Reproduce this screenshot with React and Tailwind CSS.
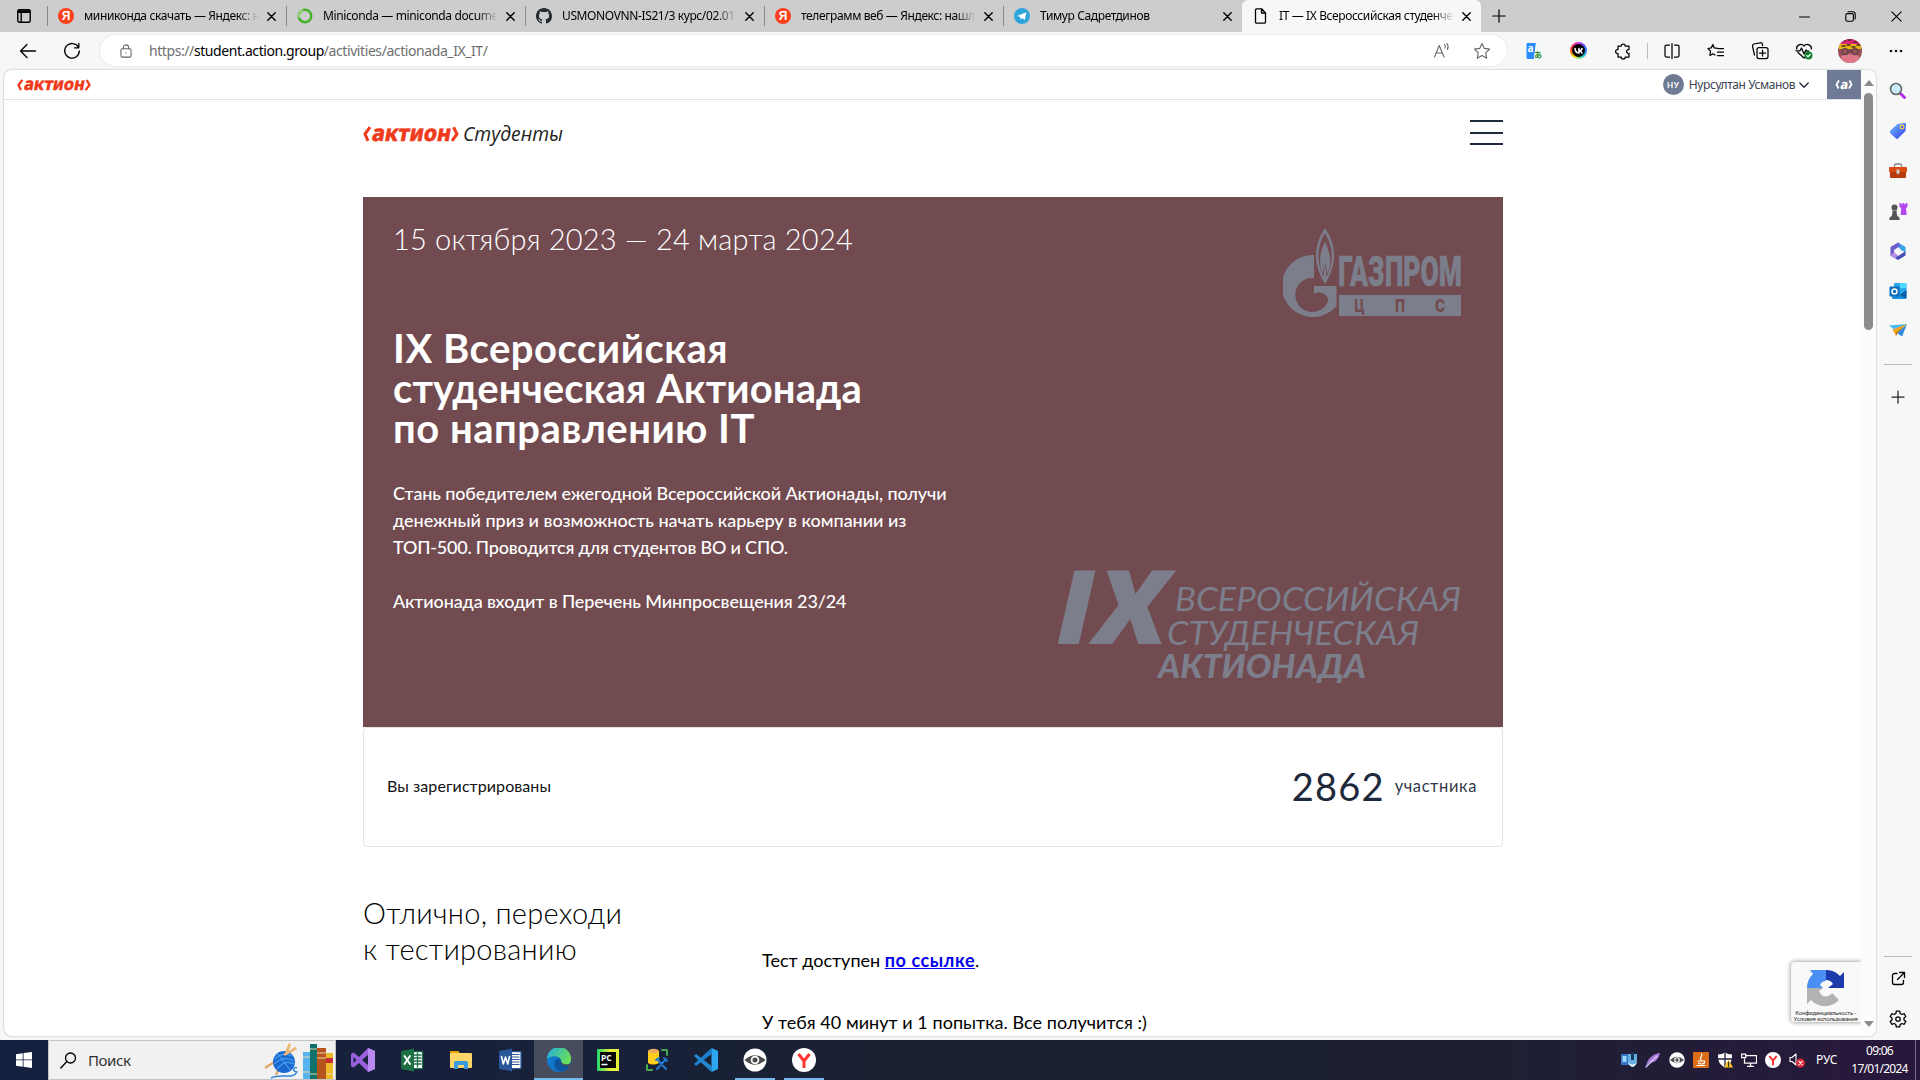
const S = ({ s = 20, box, className = "", children, ...p }) => (
  <svg width={s} height={s} viewBox={box || `0 0 ${s} ${s}`} fill="none" stroke="currentColor" strokeWidth="1.25" strokeLinecap="round" strokeLinejoin="round" className={`shrink-0 ${className}`} {...p}>
    {children}
  </svg>
);

const YandexFav = () => (
  <span className="flex h-4 w-4 items-center justify-center rounded-full bg-[#fc3f1d] font-['Liberation_Sans'] text-[12px] leading-none font-bold text-white">Я</span>
);
const RingFav = () => (
  <S s={16} strokeWidth="2.4" strokeLinecap="butt">
    <circle cx="8" cy="8" r="6.3" stroke="#43b02a" />
    <path d="M6 2A6.3 6.3 0 0 0 2 9.500" stroke="#8ed47c" />
  </S>
);
const GithubFav = () => (
  <S s={16} fill="#24292f" stroke="none">
    <path d="M8 0C3.580 0 0 3.580 0 8c0 3.540 2.290 6.530 5.470 7.590.4.070.55-.17.55-.38v-1.490c-2.010.37-2.530-.49-2.690-.94-.09-.23-.48-.94-.82-1.130-.28-.15-.68-.52-.01-.53.63-.01 1.080.58 1.230.82.72 1.210 1.870.87 2.330.66.07-.52.28-.87.51-1.070-1.780-.2-3.640-.89-3.640-3.950 0-.87.31-1.590.82-2.150-.08-.2-.36-1.020.08-2.120 0 0 .67-.21 2.200.82a7.600 7.600 0 0 1 4 0c1.530-1.040 2.200-.82 2.200-.82.44 1.100.16 1.920.08 2.120.51.56.82 1.270.82 2.150 0 3.070-1.870 3.750-3.650 3.950.29.25.54.73.54 1.480v2.200c0 .21.15.46.55.38A8 8 0 0 0 16 8c0-4.420-3.580-8-8-8Z" />
  </S>
);
const TelegramFav = () => (
  <S s={16} stroke="none">
    <circle cx="8" cy="8" r="8" fill="#2da5dc" />
    <path d="M3.200 7.900 12.300 4.300 10.800 12l-2.700-2-1.500 1.500-.3-2.500Z" fill="#fff" />
  </S>
);
const PageFav = () => (
  <S s={16} strokeWidth="1.3">
    <path d="M3.700.8h5L12.500 5v9a1.200 1.200 0 0 1-1.200 1.200H3.700A1.200 1.200 0 0 1 2.500 14V2A1.200 1.200 0 0 1 3.700.8ZM8.500.8V5h4" />
  </S>
);

const Cross = () => (
  <S s={9} strokeWidth="1.4"><path d="m.8.8 7.400 7.400M8.200.8.8 8.200" /></S>
);

const tabs = [
  { fav: <YandexFav />, title: "миниконда скачать — Яндекс: нашлось" },
  { fav: <RingFav />, title: "Miniconda — miniconda documentation" },
  { fav: <GithubFav />, title: "USMONOVNN-IS21/3 курс/02.01 Раз" },
  { fav: <YandexFav />, title: "телеграмм веб — Яндекс: нашлось" },
  { fav: <TelegramFav />, title: "Тимур Садретдинов" },
  { fav: <PageFav />, title: "IT — IX Всероссийская студенческая", active: true },
];

function TabStrip() {
  return (
    <div className="flex h-8 items-stretch bg-[#cdcdcd]">
      <div className="flex w-[47px] items-center justify-center">
        <S s={14} strokeWidth="1.4"><rect x=".8" y=".8" width="12.400" height="12.400" rx="1.500" /><path d="M1 3.200h12M4.200 3.500v9.500M1 2h12" /></S>
      </div>
      {tabs.map((t, i) => (
        <div key={i} className={`flex w-[239px] shrink-0 items-center pl-[11px] ${t.active ? "rounded-t-md bg-[#f7f7f7]" : "relative before:absolute before:top-[6px] before:left-0 before:h-5 before:w-px before:bg-[#8a8a8a]"}`}>
          {t.fav}
          <span className="ml-[10px] w-[175px] overflow-hidden text-[12px] tracking-[-0.38px] whitespace-nowrap [mask-image:linear-gradient(to_right,#000_88%,transparent)]">{t.title}</span>
          <span className="ml-[8px]"><Cross /></span>
        </div>
      ))}
      <div className="flex w-[36px] items-center justify-center"><S s={14} strokeWidth="1.2"><path d="M7 .8v12.400M.8 7h12.400" /></S></div>
      <div className="ml-auto flex items-center gap-[35px] pr-[18px]">
        <S s={11} strokeWidth="1.1"><path d="M.5 6h10" /></S>
        <S s={11} strokeWidth="1.1"><rect x=".8" y="2.600" width="7.600" height="7.600" rx="1.500" /><path d="M3 .8h5A2.300 2.300 0 0 1 10.200 3v5" /></S>
        <S s={11} strokeWidth="1.1"><path d="m.8.8 9.400 9.400M10.200.8.8 10.200" /></S>
      </div>
    </div>
  );
}

function Toolbar() {
  return (
    <div className="flex h-[37px] items-center bg-[#f7f7f7]">
      <S s={18} className="ml-[19px]" strokeWidth="1.3"><path d="M16.500 9H1.500M8 2.500 1.500 9 8 15.500" /></S>
      <S s={18} className="ml-[26px]" strokeWidth="1.3"><path d="M15.500 5.500A7.300 7.300 0 1 0 16.300 9M15.800 1.500v4.300h-4.300" /></S>
      <div className="ml-[19px] flex h-[31px] w-[1407px] items-center rounded-full bg-white pr-[16px] pl-[19px] shadow-[0_0_2px_rgba(0,0,0,0.15)]">
        <S s={14} box="0 0 14 16" className="text-[#666]" strokeWidth="1.2"><rect x="1.200" y="5.500" width="11.600" height="9.500" rx="1.500" /><path d="M4 5.500V4a3 3 0 0 1 6 0v1.500M7 10v.4" /></S>
        <span className="ml-[16px] text-[14px] leading-none tracking-[-0.42px] text-[#6f6f6f]">https://<span className="text-black">student.action.group</span>/activities/actionada_IX_IT/</span>
        <span className="ml-auto flex items-center gap-[22px] text-[#666]">
          <S s={18} strokeWidth="1.1"><path d="m1.500 15 4.700-11.500L11 15M3 11h6.500M11.500 2.500c1 1 1 2.500.3 3.500M14 1.500c1.500 2 1.500 4 .3 6" /></S>
          <S s={18} strokeWidth="1.1"><path d="m9 1.500 2.300 4.900 5.300.7-3.900 3.700 1 5.400L9 13.600l-4.700 2.600 1-5.400L1.400 7.100l5.300-.7Z" /></S>
        </span>
      </div>
      <div className="ml-[18px] flex items-center">
        <S s={18} stroke="none"><path d="M2 1h9l-2 16H3a1.500 1.500 0 0 1-1.500-1.500v-13Z" fill="#2a8cff" /><path d="M11 1h5.500v16H9Z" fill="#f4fbf4" /><text x="2.500" y="9.500" fontSize="10" fontWeight="700" fill="#fff" fontFamily="Noto Sans">a</text><text x="9" y="15.500" fontSize="8" fontWeight="700" fill="#2e8b34" fontFamily="Noto Sans CJK JP">あ</text></S>
        <span className="ml-[27px] flex h-[17px] w-[17px] items-center justify-center rounded-full bg-[conic-gradient(#d033e8,#2864ff,#1bd9d0,#ffe100,#ff3030,#d033e8)]">
          <span className="flex h-[13px] w-[13px] items-center justify-center rounded-full bg-black"><S s={9} strokeWidth="1.6" className="text-white"><path d="M1 2.500C1.300 5 3 7 5 7V2.500M5 5c1.500 0 2.700-1 3-2.500M5 4.800c1.500 0 2.500 1 3 2.200" /></S></span>
        </span>
        <S s={18} className="ml-[27px]"><path d="M4 4h3.200a2 2 0 1 1 4 0H15v3.600a2 2 0 1 0 0 3.900V15h-3.800a2 2 0 0 1-4 0H4v-3.500a2 2 0 1 1 0-3.900Z" /></S>
        <span className="mx-[15px] h-4 w-px bg-[#bdbdbd]" />
        <S s={18}><path d="M6.500 3H3.500A1.500 1.500 0 0 0 2 4.500v9A1.500 1.500 0 0 0 3.500 15h3M11.500 3h3A1.500 1.500 0 0 1 16 4.500v9a1.500 1.500 0 0 1-1.500 1.500h-3M9 1.500v15" /></S>
        <S s={18} className="ml-[26px]"><path d="m10.500 5.800-3.200-.4L5.800 2 4.200 5.400 1 6l2.500 2.600L3 13l3-1.700L8 12.500M11 6h5.500M10.500 9.500h6M10.500 13h6" transform="translate(0 .5)" /></S>
        <S s={18} className="ml-[26px]"><rect x="6" y="5.500" width="11" height="11" rx="2" /><path d="M11.500 8v6M8.500 11h6M3.500 13 1.600 4.500A2 2 0 0 1 3 2l6-1.200A2 2 0 0 1 11.500 2.500V3.500" /></S>
        <S s={18} className="ml-[26px]"><path d="M16.300 7C17 3.500 12 .5 9 4 6 .5 1 3.500 1.700 7M3 10.500 9 16l1-1M1 8.800h4L6.500 6l2.500 6 2-4 1 1h2" /><circle cx="13.500" cy="13.500" r="4" fill="#13802b" stroke="none" /><path d="m11.800 13.600 1.200 1.200 2.300-2.400" stroke="#fff" /></S>
        <S s={24} className="ml-[25px]" stroke="none">
          <clipPath id="avatar"><circle cx="12" cy="12" r="12" /></clipPath>
          <g clipPath="url(#avatar)">
            <path d="M0 0h24v24H0Z" fill="#9c5157" /><path d="M0 0h24v5H0Z" fill="#e0247c" /><path d="M1 5h22v5H1Z" fill="#e6b414" /><path d="M3 17q9-4 18 0v7H3Z" fill="#de7889" />
            <path d="M4 2h3M10 1h3M16 3h3M4 7h3M9 6h3M14 8h3M19 6h3" stroke="#472b20" strokeWidth="1.500" />
            <circle cx="7" cy="12.500" r="3" stroke="#5b4247" /><circle cx="17" cy="12.500" r="3" stroke="#5b4247" /><path d="M10 12h4" stroke="#5b4247" />
          </g>
        </S>
        <S s={16} className="ml-[26px]" fill="#111" stroke="none"><circle cx="3" cy="8" r="1.300" /><circle cx="8" cy="8" r="1.300" /><circle cx="13" cy="8" r="1.300" /></S>
      </div>
    </div>
  );
}

const AktionLogo = ({ w, h }) => (
  <svg width={w} height={h} viewBox="0 0 96 16" preserveAspectRatio="none" className="shrink-0 overflow-visible">
    <g fill="none" stroke="#f03a1c" strokeWidth="3"><path d="M7 1.200 2 8 5 14.800" /><path d="M90.500 1.200 94 8 89 14.800" /></g>
    <text x="8" y="14.800" transform="translate(2.600 0) skewX(-10)" fontFamily="Noto Sans" fontWeight="800" fontSize="22.500" fill="#f03a1c" stroke="#f03a1c" strokeWidth=".5" textLength="79" lengthAdjust="spacingAndGlyphs">актион</text>
  </svg>
);

function PageTop() {
  return (
    <div className="flex h-[30px] shrink-0 items-center border-b border-[#e3e3e3] pl-[13px]">
      <AktionLogo w={74} h={12} />
      <span className="ml-auto flex h-[21px] w-[21px] items-center justify-center rounded-full bg-[#6f7b94] font-['Lato'] text-[8px] font-bold tracking-[0.6px] text-white">НУ</span>
      <span className="ml-[5px] text-[12px] tracking-[-0.42px] text-[#3b4252]">Нурсултан Усманов</span>
      <S s={10} className="ml-[4px] text-[#2b3140]" strokeWidth="1.4"><path d="m.8 3 4.200 4.300L9.200 3" /></S>
      <span className="ml-[18px] flex h-[29px] w-[34px] items-center justify-center self-start bg-[#6f7b94] text-white">
        <svg width="18" height="11" viewBox="0 0 18 11"><path d="M4 1.500 1.500 5.500 3.500 9.500M14.500 1.500l2 4-2.500 4" fill="none" stroke="#fff" strokeWidth="1.800" /><text x="6.200" y="9.500" transform="skewX(-8)" fontFamily="Noto Sans" fontWeight="800" fontSize="13" fill="#fff">a</text></svg>
      </span>
    </div>
  );
}

const GazpromLogo = () => (
  <svg width="180" height="90" viewBox="0 0 180 90" className="shrink-0">
    <g fill="#7c7e8b">
      <path d="M31 27V50A17 17 0 1 0 45.500 72 9.500 9.500 0 0 0 31 66V58H53.500V78A31 31 0 1 1 31 27Z" />
      <path d="M42 0C30 18 30 36 42 56 54 36 54 18 42 0Zm0 5c8.500 14 9 29 1.500 44L42 33l-1.500 16C33.500 34 33.500 19 42 5Z" fillRule="evenodd" />
      <path d="M42 14c-5.500 10-6.500 21-2.500 32L42 34l2.500 12C49 35 47.500 24 42 14Z" />
      <path d="M56 67h122v21H56Z" />
      <text x="55" y="57.500" fontFamily="Roboto" fontWeight="900" fontSize="43" stroke="#7c7e8b" strokeWidth=".6" textLength="124" lengthAdjust="spacingAndGlyphs">ГАЗПРОМ</text>
    </g>
    <g fill="#724b50" fontFamily="Roboto" fontWeight="900" fontSize="18">
      <text x="71.500" y="84" textLength="10" lengthAdjust="spacingAndGlyphs">Ц</text>
      <text x="112" y="84" textLength="10" lengthAdjust="spacingAndGlyphs">П</text>
      <text x="152" y="84" textLength="10" lengthAdjust="spacingAndGlyphs">С</text>
    </g>
  </svg>
);

const EventLogo = () => (
  <svg width="406" height="118" viewBox="0 0 406 118" className="shrink-0 overflow-visible" fill="#7c7e8b" fontStyle="italic">
    <text x="-1" y="77" fontFamily="Open Sans" fontWeight="800" fontSize="102" textLength="112" lengthAdjust="spacingAndGlyphs">IX</text>
    <g fontFamily="Lato" fontSize="32">
      <text x="118" y="44" textLength="286" lengthAdjust="spacingAndGlyphs">ВСЕРОССИЙСКАЯ</text>
      <text x="110" y="77.500" textLength="252" lengthAdjust="spacingAndGlyphs">СТУДЕНЧЕСКАЯ</text>
      <text x="101" y="110.500" fontWeight="900" textLength="208" lengthAdjust="spacingAndGlyphs">АКТИОНАДА</text>
    </g>
  </svg>
);

function Site() {
  return (
    <div className="ml-[359px] flex w-[1140px] flex-col font-['Lato']">
      <header className="flex h-[97px] shrink-0 items-start justify-between pt-[20px]">
        <div className="flex items-center pt-[3px]">
          <AktionLogo w={96} h={16} />
          <svg width="104" height="22" viewBox="0 0 104 22" className="ml-1 overflow-visible"><text x="0" y="17.500" fontFamily="Open Sans" fontStyle="italic" fontSize="20" fill="#222" textLength="100" lengthAdjust="spacingAndGlyphs">Студенты</text></svg>
        </div>
        <div className="flex w-[33px] flex-col gap-[9.500px]">
          <span className="h-0.5 bg-[#1e293b]" /><span className="h-0.5 bg-[#1e293b]" /><span className="h-0.5 bg-[#1e293b]" />
        </div>
      </header>
      <section className="flex h-[530px] shrink-0 justify-between bg-[#724b50] pr-[40px] pl-[30px] text-white">
        <div className="pt-[24px]">
          <p className="text-[29px] leading-9 font-light tracking-[0.2px]">15 октября 2023 — 24 марта 2024</p>
          <h1 className="mt-[71px] flex flex-col text-[40px] leading-10 font-bold whitespace-nowrap">
            <span className="tracking-[0.52px]">IX Всероссийская</span>
            <span className="tracking-[0.1px]">студенческая Актионада</span>
            <span className="tracking-[0.5px]">по направлению IT</span>
          </h1>
          <p className="mt-[32px] text-[18px] leading-[27px] font-medium tracking-[-0.13px] whitespace-nowrap">
            Стань победителем ежегодной Всероссийской Актионады, получи<br /><span className="tracking-[-0.03px]">денежный приз и возможность начать карьеру в компании из</span><br /><span className="tracking-[-0.2px]">ТОП-500. Проводится для студентов ВО и СПО.</span><br /><br />Актионада входит в Перечень Минпросвещения 23/24
          </p>
        </div>
        <div className="flex flex-col items-end justify-between pt-[31px] pb-[42px]">
          <GazpromLogo />
          <EventLogo />
        </div>
      </section>
      <section className="flex h-[120px] shrink-0 items-center justify-between rounded border border-[#e4e4e6] pr-[25px] pb-[3px] pl-[23px] text-[#1e293b]">
        <span className="text-[16px] tracking-[0.08px] text-[#111]">Вы зарегистрированы</span>
        <span className="flex items-center gap-[10px]"><span className="text-[38px] leading-none tracking-[1.2px]">2862</span><span className="pt-px text-[16.500px] tracking-[0.6px] text-[#333b4a]">участника</span></span>
      </section>
      <section className="flex pt-[48px] text-black">
        <h2 className="w-[399px] text-[29px] leading-9 font-light tracking-[0.28px]">Отлично, переходи<br />к тестированию</h2>
        <div className="flex flex-col gap-[35px] pt-[52px] text-[18px] leading-[27px] whitespace-nowrap">
          <p>Тест доступен <a className="font-bold tracking-[0.55px] text-[#0000ee] underline">по ссылке</a>.</p>
          <p className="tracking-[0.04px]">У тебя 40 минут и 1 попытка. Все получится :)</p>
        </div>
      </section>
    </div>
  );
}

function Scrollbar() {
  return (
    <div className="flex w-[15px] flex-col items-center bg-[#fcfcfc] pt-[10px] pb-[9px]">
      <svg width="10" height="6"><path d="M0 6 5 0l5 6Z" fill="#8b8b8b" /></svg>
      <span className="mt-[7px] h-[237px] w-[9px] rounded-full bg-[#8b8b8b]" />
      <svg width="10" height="6" className="mt-auto"><path d="M0 0h10L5 6Z" fill="#8b8b8b" /></svg>
    </div>
  );
}

const Recaptcha = () => (
  <div className="absolute right-0 bottom-[14px] flex h-[60px] w-[70px] flex-col items-center rounded-l-sm bg-[#f9f9f9] pt-[7px] pr-[1px] shadow-[0_0_5px_#808080] [clip-path:inset(-6px_0_-6px_-6px)]">
    <svg width="38" height="38" viewBox="0 0 38 38" className="shrink-0">
      <path d="M0 19A19 19 0 0 1 6 5L3 1h16v11a7 7 0 0 0-6 4l3 3Z" fill="#4a90f4" />
      <path d="M19 1a18 18 0 0 1 14 6l4-4v16H21l5-4a8 8 0 0 0-7-4Z" fill="#1c3aa9" />
      <path d="M0 19h16l-4 3c3 7 9 7 13 2l7 7A19 19 0 0 1 4 31l-4 4Z" fill="#b3b3b3" />
    </svg>
    <span className="mt-[3px] text-center font-['Roboto'] text-[6px] leading-[6px] tracking-[-0.23px] whitespace-nowrap text-[#333]">Конфиденциальность -<br />Условия использования</span>
  </div>
);

function Sidebar() {
  return (
    <aside className="flex w-[43px] flex-col items-center pt-[11px] pb-[12px]">
      <div className="flex flex-col items-center gap-[20px]">
        <S s={20} strokeWidth="1.600"><path d="m12.500 12.500 4 4" stroke="#b12ff0" strokeWidth="3" /><circle cx="8" cy="8" r="5.500" fill="#c9ecfb" stroke="#666" /></S>
        <S s={20} stroke="none"><path d="M2 10 9.500 3 17 2a1 1 0 0 1 1 1l-.5 7L10 17.500a1.500 1.500 0 0 1-2 0L2 12Z" fill="url(#tag)" /><circle cx="14" cy="6" r="1.800" fill="#4a5fd8" stroke="#ffd43b" strokeWidth="1.200" /><defs><linearGradient id="tag" x2="1" y2="1"><stop stopColor="#6cc0ff" /><stop offset="1" stopColor="#3b3bf0" /></linearGradient></defs></S>
        <S s={20} stroke="none"><path d="M6.500 6V4.500A1.500 1.500 0 0 1 8 3h4a1.500 1.500 0 0 1 1.500 1.500V6" stroke="#888" strokeWidth="1.300" /><path d="M1 7a1 1 0 0 1 1-1h16a1 1 0 0 1 1 1v4H1Z" fill="#dc4a13" /><path d="M2 11h16v5a1 1 0 0 1-1 1H3a1 1 0 0 1-1-1Z" fill="#b8390e" /><path d="M8.500 8.500h3V12L10 13.500 8.500 12Z" fill="#c9cfd5" /></S>
        <S s={20} stroke="none"><path d="M11.500 2h1.800v1.300h1.400V2h1.600v1.300h1.400V2h1.800v4l-1.500 1 .7 7h-6l.4-7-1.600-1Z" fill="#b348f0" /><circle cx="6.500" cy="6.500" r="3" fill="#555" /><path d="M4 9.500h5l-.5 1.500.8 4 2.200 1.500V19H1.500v-2.500L3.800 15l.8-4Z" fill="#555" /></S>
        <S s={20} stroke="none"><path d="M10 1.500 17.500 6v5l-4-1.500-3.500-4Z" fill="#35a7e8" /><path d="M10 1.500 2.500 6v9l3.500 1V9l7-4.500Z" fill="#6a5fcf" /><path d="m6 13 4 2 4-2.500 3.500-2.500v4.500L10 19l-5-3Z" fill="#4651b8" /><path d="M2.500 14.500 6 11l4 3.500-2.500 2.800Z" fill="#b88be8" /></S>
        <S s={20} stroke="none"><rect x="6" y="2" width="12.500" height="15" rx="1" fill="#28a8ea" /><path d="M12 2h6.500v5H12Z" fill="#50d9ff" /><path d="M4 10.500 18.500 18H5.500A1.500 1.500 0 0 1 4 16.500Z" fill="#1490df" /><path d="m18.500 9-7 5 7 4Z" fill="#0a5fa8" /><rect x="1.500" y="5.500" width="10" height="10" rx="1" fill="#0f6cbd" /><circle cx="6.500" cy="10.500" r="2.500" stroke="#fff" strokeWidth="1.500" /></S>
        <S s={20} stroke="none"><path d="M1 4.500 19 3 8 10Z" fill="#47b9f5" /><path d="m19 3-5 12.500-4.500-3.300Z" fill="#2788e8" /><path d="m4.500 8.500 14-5.300L8 11.500V15Z" fill="#f2a31b" /><path d="m8 15 1.700-3L19 3 8 11.500Z" fill="#a56a0a" /></S>
      </div>
      <span className="mt-[23px] h-px w-7 bg-[#b9b9b9]" />
      <S s={14} className="mt-[25px] text-[#222]"><path d="M7 1v12M1 7h12" /></S>
      <span className="mt-auto h-px w-7 bg-[#b9b9b9]" />
      <S s={16} className="mt-[14px]" strokeWidth="1.300"><path d="M7 2.500H4.500a2 2 0 0 0-2 2v7a2 2 0 0 0 2 2h7a2 2 0 0 0 2-2V9.500M9.500 1.500h5v5M14.500 1.500 7.500 8.500" /></S>
      <S s={18} className="mt-[23px]" strokeWidth="1.300"><path d="m7.300 1.200-.5 2.300-1.700 1-2.300-.8L1.200 6.500 3 8.100v1.800l-1.800 1.600 1.600 2.800 2.300-.8 1.700 1 .5 2.300h3.400l.5-2.300 1.700-1 2.300.8 1.600-2.800L15 9.900V8.100l1.800-1.600-1.600-2.800-2.300.8-1.700-1-.5-2.300Z" /><circle cx="9" cy="9" r="2.200" /></S>
    </aside>
  );
}

const Eye = ({ s }) => (
  <S s={s} box="0 0 24 24" stroke="none"><circle cx="12" cy="12" r="11.500" fill="#fff" /><path d="M1.500 12Q12 2.500 22.500 12 12 21.500 1.500 12Z" fill="#4b4b4b" /><circle cx="12" cy="12" r="4.300" fill="#fff" /><circle cx="12" cy="12" r="2.500" fill="#4b4b4b" /></S>
);
const YBrowser = ({ s }) => (
  <S s={s} box="0 0 24 24" strokeLinecap="butt" strokeLinejoin="miter"><circle cx="12" cy="12" r="12" fill="#fff" stroke="none" /><path d="M6.500 6 12 13l5.500-7M12 12.500V20" stroke="#f33" strokeWidth="3" /></S>
);

const apps = [
  { icon: <S s={24} stroke="none"><path d="m17 0 7 3v18l-7 3L8 15l-5.500 4.500L0 18V6l2.500-1.500L8 9Zm0 7-6 5 6 5ZM2.500 9v6l3-3Z" fill="#9a5fdd" fillRule="evenodd" /><path d="m17 0 7 3v18l-7 3Z" fill="#b78af2" /></S> },
  { icon: <S s={24} stroke="none"><path d="M11 3.500h11.500v17H11Z" fill="#fff" stroke="#1d7044" /><path d="M14 7h7M14 10h7M14 13h7M14 16h7M17.500 5v14" stroke="#1d7044" strokeWidth="1.300" /><path d="m1 3 13-2.500v23L1 21Z" fill="#1d7044" /><path d="m4.500 8 5.500 8M10 8l-5.500 8" stroke="#fff" strokeWidth="2" /></S> },
  { icon: <S s={24} stroke="none"><path d="M1 3h8l2 2H1Z" fill="#e8a200" /><rect x="1" y="5" width="22" height="15" rx="1" fill="#ffd667" /><path d="M5 21v-6a2 2 0 0 1 2-2h10a2 2 0 0 1 2 2v6h-4v-4H9v4Z" fill="#3c9be0" /></S> },
  { icon: <S s={24} stroke="none"><path d="M11 3.500h12v17H11Z" fill="#fff" stroke="#2b579a" /><path d="M13 6.500h8M13 9h8M13 11.500h8M13 14h8M13 16.500h8" stroke="#2b579a" strokeWidth="1.200" /><path d="m1 3 13-2.500v23L1 21Z" fill="#2b579a" /><path d="m3.500 8.500 1.800 7.500 2.200-7 2.200 7 1.800-7.500" stroke="#fff" strokeWidth="1.600" /></S> },
  { active: true, icon: <S s={24} stroke="none"><defs><linearGradient id="eg" x2="1" y2=".5"><stop stopColor="#1fa8e8" /><stop offset="1" stopColor="#6be058" /></linearGradient></defs><circle cx="12" cy="12" r="12" fill="#1277c9" /><path d="M0 11A12 12 0 0 1 24 11c0 5-4 7-9 6-2-1-1-2-1-4 0-6-10-6-14-2Z" fill="url(#eg)" /><path d="M14 13c0 3 4 5 9 4a12 12 0 0 1-9 6.500C6 23 6 13 10 11c2-.5 4 0 4 2Z" fill="#0d559f" /><path d="M14 13.500c-1 2 1 4.500 5 4.500h3.700L24 15c-2 1.500-8 2.500-10-1.500Z" fill="#474d5c" /></S> },
  { icon: <S s={24} stroke="none"><rect x="1" y="1" width="22" height="22" fill="url(#pc)" /><rect x="4" y="4" width="16" height="16" fill="#080808" /><text x="5" y="12.500" fontFamily="Open Sans" fontWeight="700" fontSize="8.500" fill="#fff">PC</text><path d="M6 16.500h5" stroke="#fff" strokeWidth="1.300" /><defs><linearGradient id="pc" x2="1"><stop stopColor="#22d76e" /><stop offset=".6" stopColor="#e5f13b" /></linearGradient></defs></S> },
  { icon: <S s={24} stroke="none"><path d="M3 3v12q5 3 11 0V3Z" fill="#ffcf1b" /><ellipse cx="8.500" cy="3" rx="5.500" ry="2.200" fill="#ecaa62" /><path d="M17 2h5v5M2 17v5h5" stroke="#46a84a" strokeWidth="2" /><path d="m12 11 9 10M21 11l-9 10M11 12l3-2M19 10l3 3" stroke="#1f78d1" strokeWidth="2" /></S> },
  { icon: <S s={24} stroke="none"><path d="M0 16 17.500 0v6L2 18Z" fill="#1b80cf" /><path d="m0 8 2-2 15.500 12v6Z" fill="#2489d0" /><path d="M17.500 0 24 3v18l-6.500 3Z" fill="#2ba7f3" /></S> },
  { icon: <Eye s={24} />, open: true },
  { icon: <YBrowser s={24} />, open: true },
];

function Taskbar() {
  return (
    <div className="flex h-10 items-stretch bg-[linear-gradient(to_right,#15203f,#19213a_30%,#1a2130_52%,#1d2033_78%,#29183d)] text-white">
      <div className="flex w-12 items-center justify-center"><S s={16} stroke="none" fill="#fff"><path d="m0 2.200 6.700-1v6.300H0ZM7.500 1.100 16 0v7.500H7.500ZM0 8.300h6.700v6.400l-6.700-1ZM7.500 8.300H16V16l-8.500-1.200Z" /></S></div>
      <div className="flex w-[288px] items-center border border-[#c4c4c4] bg-[#f1f1f1] pr-[2px] pl-[11px] text-[#333]">
        <S s={17} className="text-black" strokeWidth="1.300"><circle cx="10.500" cy="6" r="5" /><path d="m6.800 9.500-6 6.500" /></S>
        <span className="ml-[11px] text-[15px] tracking-[-0.4px]">Поиск</span>
        <svg width="69" height="38" viewBox="0 0 69 38" className="ml-auto shrink-0">
          <path d="M7 37c10-5 22 2 26-6-6-1-3-6 0-4" fill="none" stroke="#2a86dd" strokeWidth="1.500" />
          <path d="M26 3 12 34M32 7 1 27" stroke="#e5a868" strokeWidth="2.500" />
          <circle cx="20" cy="21" r="11" fill="#1969cf" />
          <path d="M11 18q8-8 17-3M10 23q10-9 20-3M13 28q8-10 17-5M14 13l12 16" stroke="#4ba0ee" strokeWidth="1.200" fill="none" />
          <path d="M22 12 26 3M20 14 32 7" stroke="#eeb777" strokeWidth="2.500" />
          <path d="M39 11h7v27h-7Z" fill="#58b4ee" /><path d="M46 3h7v35h-7Z" fill="#11716b" /><path d="M53 7h9v31h-9Z" fill="#b6541d" /><path d="M62 12h7v26h-7Z" fill="#edbb27" /><path d="M62 17h7v5h-7Z" fill="#c92b38" />
          <path d="M39 16h7M39 31h7M46 8h7M46 33h7M53 12h9M53 17h9M62 33h7" stroke="#e8d5a8" />
        </svg>
      </div>
      <div className="flex pl-[2px]">
        {apps.map((a, i) => (
          <div key={i} className={`flex w-[49.100px] items-center justify-center ${a.active ? "bg-[#474d5c]" : ""}`}>
            <span className={`flex h-full items-center justify-center ${a.active ? "w-full border-b-2 border-[#76b9ed] pt-0.5" : a.open ? "w-10 border-b-2 border-[#76b9ed] pt-0.5" : ""}`}>{a.icon}</span>
          </div>
        ))}
      </div>
      <div className="ml-auto flex items-center gap-2">
        <S s={16} stroke="none"><path d="M0 2h8v11H0Z" fill="#3476c5" /><path d="M1.500 4h4v6h-4Z" fill="#9bd5fa" /><path d="M7 2h9v7q-1 5-4.500 6Q8 14 7 9Z" fill="#65aee0" /><path d="M10 0h3v8h-3Z" fill="#1b365d" /><path d="M7 10q4.500 5 9 0-1 4-4.500 5Q8 14 7 10Z" fill="#e6f3ff" /></S>
        <S s={16} stroke="none"><path d="M1 15C2 7 7 2 15 1c-1 6-5 10-11 10Z" fill="#a678d8" /><path d="m1 15 11-11" stroke="#e1c9f7" /></S>
        <Eye s={16} />
        <S s={16} stroke="none"><rect width="16" height="16" rx="1" fill="#dc6c18" /><path d="M8.500 2c2 2-3 3-.5 6M5 9h6.500v2q-3 2-6 0M4 13.500h8" stroke="#fff" strokeWidth="1.200" /></S>
        <S s={16} stroke="none"><path d="M8 .5q3 2 7 2c0 6-1 10-7 13-6-3-7-7-7-13q4 0 7-2Z" fill="#fff" /><path d="M8 1v14M1.500 7h13" stroke="#20203a" strokeWidth="1.300" /><path d="m11.500 7.500 4.500 8H7Z" fill="#ffc526" /><path d="M11.500 10v2.500M11.500 13.700v.6" stroke="#222" strokeWidth="1.200" /></S>
        <S s={16} strokeLinejoin="miter"><path d="M5 3.500h10.500v7.500H3.500V7M9.500 11v3M6.500 14.300h6M.7 2h4v3.500h-4Z" /></S>
        <YBrowser s={16} />
        <S s={16} stroke="none"><path d="M1 5.500h2L7 2v11L3 9.500H1Z" stroke="#fff" strokeWidth="1.100" /><circle cx="11.500" cy="11" r="4.500" fill="#da2a3c" /><path d="m9.900 9.400 3.200 3.200M13.100 9.400l-3.200 3.200" stroke="#fff" strokeWidth="1.200" /></S>
        <span className="ml-[3px] w-[22px] text-[12px] tracking-[-0.1px]">РУС</span>
        <div className="ml-[5px] flex w-[57px] flex-col items-center text-[12px] leading-[18px] tracking-[-0.75px] whitespace-nowrap"><span>09:06</span><span>17/01/2024</span></div>
        <span className="mr-[4px] ml-[-1px] h-10 w-px bg-[#776c86]" />
      </div>
    </div>
  );
}

export default function App() {
  return (
    <div className="flex h-[1080px] w-[1920px] flex-col overflow-hidden bg-[#f7f7f7] font-['Noto_Sans',sans-serif] text-black">
      <TabStrip />
      <Toolbar />
      <div className="flex min-h-0 flex-1 pt-px">
        <main className="mb-[4px] ml-[4px] flex w-[1872px] overflow-hidden rounded-lg bg-white shadow-[0_0_2px_rgba(0,0,0,0.35)]">
          <div className="relative flex min-w-0 flex-1 flex-col overflow-hidden">
            <PageTop />
            <Site />
            <Recaptcha />
          </div>
          <Scrollbar />
        </main>
        <Sidebar />
      </div>
      <Taskbar />
    </div>
  );
}
